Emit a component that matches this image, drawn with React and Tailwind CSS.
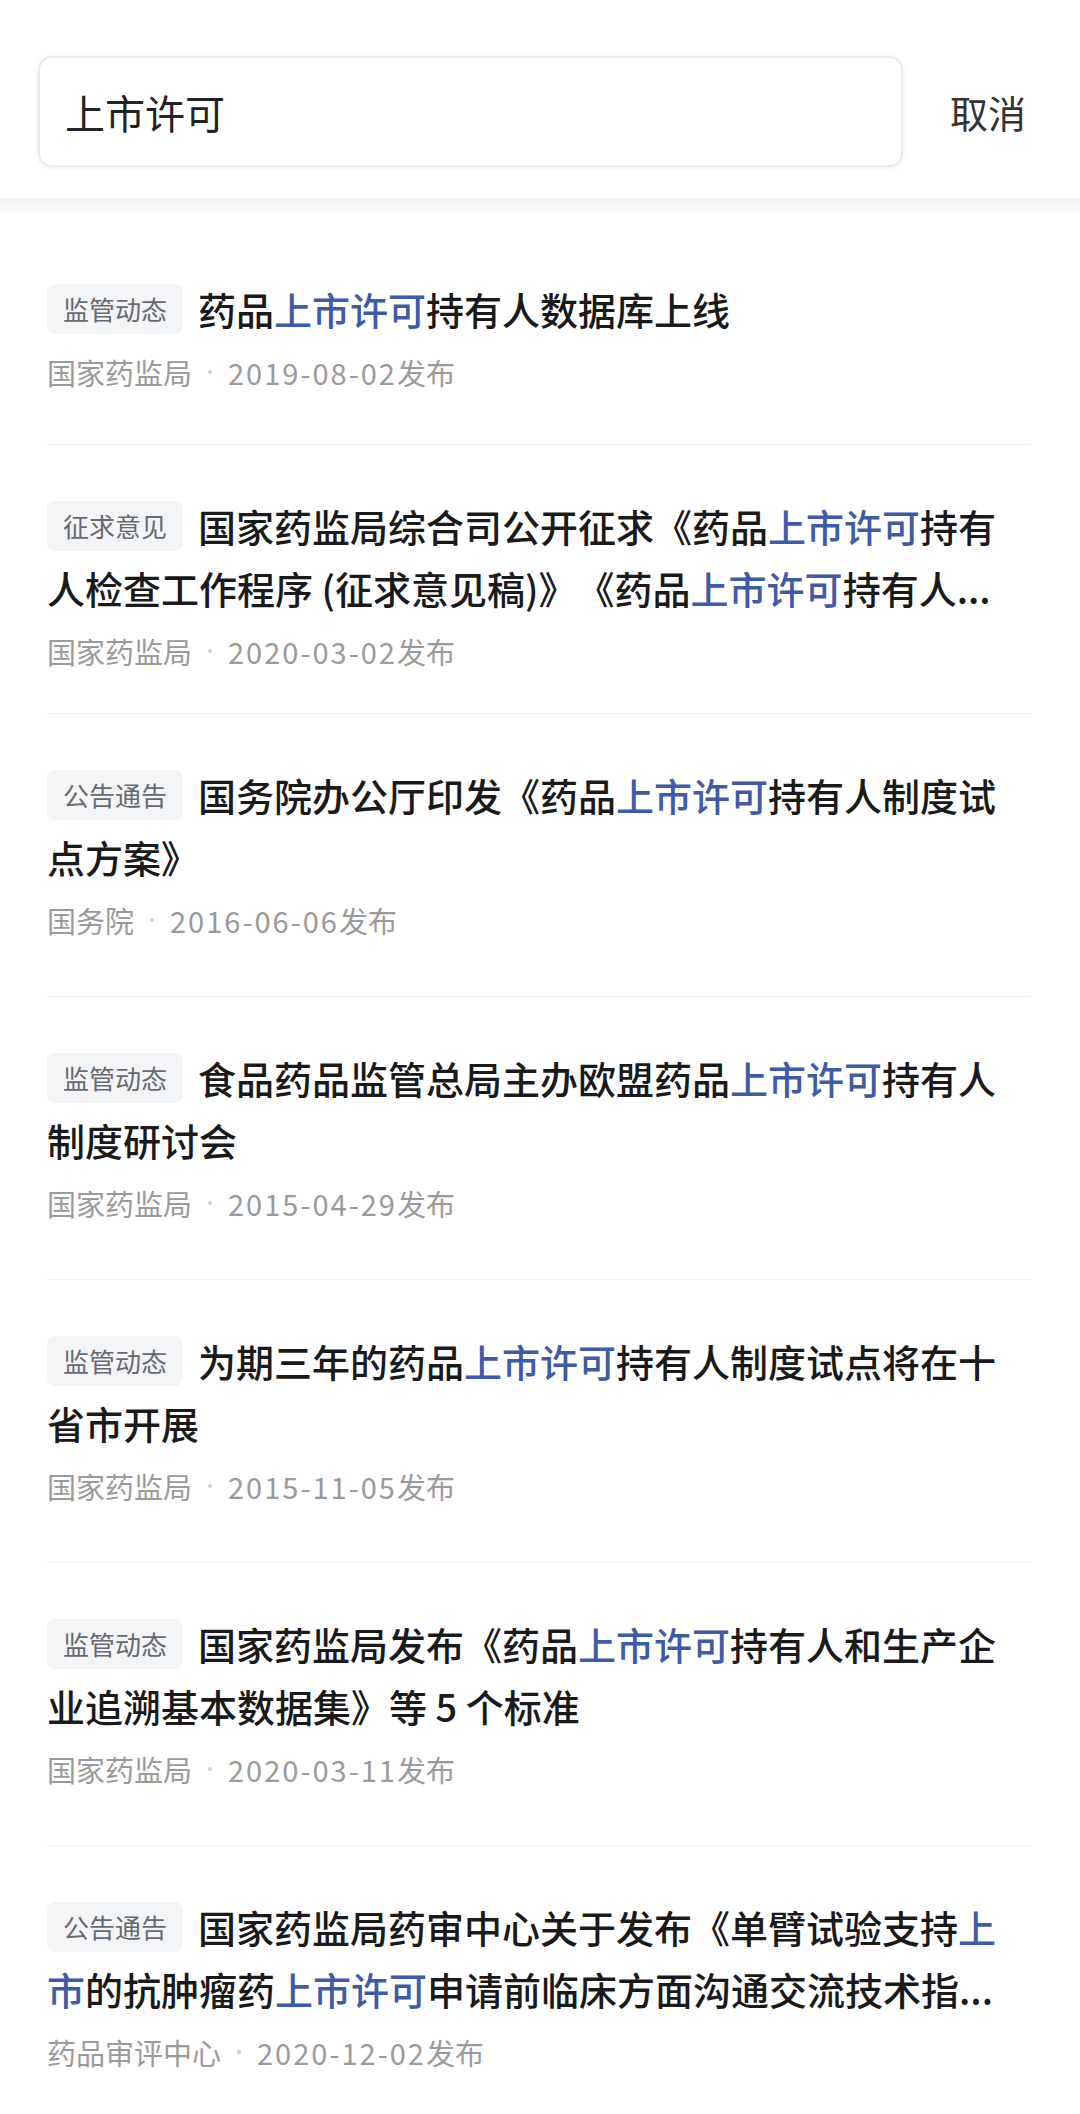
import React from "react";

const items = [
  { tag: "监管动态", lines: ["药品{上市许可}持有人数据库上线"], src: "国家药监局", date: "2019-08-02", pb: "pb-[52px]" },
  {
    tag: "征求意见",
    lines: ["国家药监局综合司公开征求《药品{上市许可}持有", "人检查工作程序 (征求意见稿)》《药品{上市许可}持有人..."],
    src: "国家药监局",
    date: "2020-03-02",
    pb: "pb-[42px]",
  },
  { tag: "公告通告", lines: ["国务院办公厅印发《药品{上市许可}持有人制度试", "点方案》"], src: "国务院", date: "2016-06-06", pb: "pb-[56px]" },
  { tag: "监管动态", lines: ["食品药品监管总局主办欧盟药品{上市许可}持有人", "制度研讨会"], src: "国家药监局", date: "2015-04-29", pb: "pb-[56px]" },
  { tag: "监管动态", lines: ["为期三年的药品{上市许可}持有人制度试点将在十", "省市开展"], src: "国家药监局", date: "2015-11-05", pb: "pb-[56px]" },
  { tag: "监管动态", lines: ["国家药监局发布《药品{上市许可}持有人和生产企", "业追溯基本数据集》等 5 个标准"], src: "国家药监局", date: "2020-03-11", pb: "pb-[56px]" },
  {
    tag: "公告通告",
    lines: ["国家药监局药审中心关于发布《单臂试验支持{上}", "{市}的抗肿瘤药{上市许可}申请前临床方面沟通交流技术指..."],
    src: "药品审评中心",
    date: "2020-12-02",
    pb: "pb-[42px]",
  },
];

function Line({ text }) {
  const parts = text.split(/[{}]/);
  return (
    <span className="whitespace-nowrap">
      {parts.map((p, i) =>
        i % 2 === 1 ? (
          <span key={i} className="text-[#3f5aa6]">
            {p}
          </span>
        ) : (
          <span key={i}>{p}</span>
        )
      )}
    </span>
  );
}

function Item({ item }) {
  return (
    <div className={"ml-[47px] mr-[49px] border-b border-[#f1f2f3] pt-[50px] " + item.pb}>
      <div className="text-[38px] leading-[62px] font-medium text-[#1a1a1a] [text-spacing-trim:space-all]">
        <div className="flex items-center h-[62px]">
          <span className="inline-flex items-center justify-center h-[50px] w-[136px] rounded-[8px] bg-[#f3f4f6] text-[26px] leading-none font-normal text-[#666a70] mr-[15px] shrink-0">
            {item.tag}
          </span>
          <Line text={item.lines[0]} />
        </div>
        {item.lines[1] && (
          <div className="h-[62px]">
            <Line text={item.lines[1]} />
          </div>
        )}
      </div>
      <div className="mt-[12px] h-[40px] flex items-center text-[29px] leading-[40px] text-[#9a9a9a]">
        <span>{item.src}</span>
        <span className="mx-[16px] w-[4px] h-[4px] rounded-full bg-[#d0d0d0] shrink-0" />
        <span className="tracking-[2px]">{item.date}</span>
        <span>发布</span>
      </div>
    </div>
  );
}

export default function App() {
  return (
    <div className="w-[1080px] min-h-[2114px] bg-white font-['Noto_Sans_CJK_SC','Noto_Sans',sans-serif]">
      <div className="h-[198px] bg-white pt-[56px] flex items-start">
        <div className="ml-[38px] w-[865px] h-[111px] rounded-[14px] border-2 border-[#e8ecf2] bg-white shadow-[0_1px_4px_rgba(200,210,225,0.4)] flex items-center pl-[25px]">
          <span className="text-[40px] leading-none text-[#222]">上市许可</span>
        </div>
        <div className="ml-[47px] h-[111px] flex items-center text-[38px] leading-none text-[#333]">取消</div>
      </div>
      <div className="h-[15px] bg-linear-to-b from-[#f2f3f4] to-[#fafafa]" />
      <div className="pt-[15px]">
        {items.map((it, i) => (
          <Item key={i} item={it} />
        ))}
      </div>
    </div>
  );
}
